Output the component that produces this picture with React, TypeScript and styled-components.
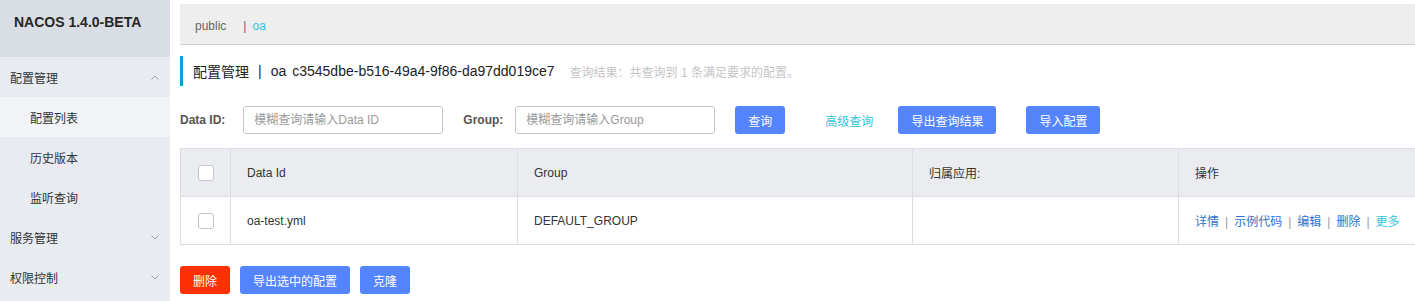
import React from "react";
import styled, { createGlobalStyle } from "styled-components";

const GlobalStyle = createGlobalStyle`
	html, body {
		margin: 0;
		padding: 0;
		overflow: hidden;
		background: #fff;
	}
	body {
		font-family: "Liberation Sans", "Noto Sans CJK SC", sans-serif;
		font-size: 12px;
		color: #333;
	}
	* {
		box-sizing: border-box;
	}
`;

const Layout = styled.div`
	display: flex;
	width: 1415px;
	height: 301px;
	overflow: hidden;
`;

const Side = styled.aside`
	width: 170px;
	flex: none;
	background-color: #e8ebf0;
	display: flex;
	flex-direction: column;
`;

const Logo = styled.div`
	height: 57px;
	background-color: #d9dde4;
	padding: 14px 0 0 14px;
	font-size: 14px;
	font-weight: 700;
	line-height: 16px;
	color: #262626;
`;

const MenuItem = styled.div<{ $level?: number; $active?: boolean }>`
	height: 40px;
	display: flex;
	align-items: center;
	justify-content: space-between;
	padding: 0 11px 0 ${(p) => (p.$level === 2 ? 30 : 10)}px;
	background-color: ${(p) => (p.$active ? "#f2f3f7" : "transparent")};
	color: #333;
	font-size: 12px;
`;

const Main = styled.main`
	flex: 1;
	min-width: 0;
	padding-left: 10px;
	display: flex;
	flex-direction: column;
`;

const Crumbs = styled.div`
	margin-top: 4px;
	height: 41px;
	background-color: #eeeeee;
	border-bottom: 1px solid #cfcfcf;
	display: flex;
	align-items: center;
	padding: 4px 0 0 15px;
	color: #666;
	font-size: 12px;
`;

const CrumbSep = styled.span`
	margin: 0 6px 0 17px;
`;

const CrumbActive = styled.span`
	color: #33c4e0;
`;

const TitleRow = styled.div`
	margin-top: 11px;
	height: 30px;
	border-left: 3px solid #0a9fd8;
	padding-left: 10px;
	display: flex;
	align-items: center;
	font-size: 14px;
	color: #222;
`;

const TitleBar = styled.span`
	margin: 0 9px;
`;

const TitleId = styled.span`
	margin-left: 6px;
`;

const ResultText = styled.span`
	margin-left: 15px;
	font-size: 12px;
	color: #c5c5c5;
`;

const SearchRow = styled.div`
	margin-top: 20px;
	display: flex;
	align-items: center;
	height: 28px;
`;

const FieldLabel = styled.label<{ $gap?: number }>`
	font-weight: 700;
	font-size: 12px;
	color: #555;
	margin-right: ${(p) => p.$gap ?? 12}px;
`;

const Input = styled.input`
	width: 200px;
	height: 28px;
	border: 1px solid #c4c6cf;
	border-radius: 3px;
	padding: 0 10px;
	font-family: inherit;
	font-size: 12px;
	color: #333;
	margin-right: 20px;
	outline: none;
	&::placeholder {
		color: #999;
	}
`;

const Button = styled.button<{ $variant?: "primary" | "danger"; $gap?: number }>`
	height: 28px;
	padding: 0 13px;
	border: none;
	border-radius: 3px;
	font-family: inherit;
	font-size: 12px;
	color: #fff;
	background-color: ${(p) => (p.$variant === "danger" ? "#ff3000" : "#5584ff")};
	margin-right: ${(p) => p.$gap ?? 10}px;
	cursor: pointer;
	white-space: nowrap;
`;

const TextButton = styled.span`
	font-size: 12px;
	color: #33c4e0;
	margin: 0 25px 0 40px;
`;

const Table = styled.table`
	margin-top: 14px;
	width: 1280px;
	border-collapse: collapse;
	table-layout: fixed;
	border: 1px solid #dcdee3;
	font-size: 12px;
`;

const Th = styled.th<{ $w?: number; $check?: boolean }>`
	width: ${(p) => (p.$w ? `${p.$w}px` : "auto")};
	height: 48px;
	background-color: #ebecf0;
	border: 1px solid #dcdee3;
	text-align: left;
	font-weight: 400;
	color: #333;
	padding: ${(p) => (p.$check ? 0 : "0 16px")};
`;

const Td = styled.td<{ $check?: boolean }>`
	height: 48px;
	border: 1px solid #dcdee3;
	padding: ${(p) => (p.$check ? 0 : "0 16px")};
	color: #333;
`;

const CheckCell = styled.div`
	display: flex;
	justify-content: center;
`;

const Checkbox = styled.span`
	display: block;
	width: 16px;
	height: 16px;
	border: 1px solid #c4c6cf;
	border-radius: 3px;
	background: #fff;
`;

const Action = styled.a<{ $light?: boolean }>`
	color: ${(p) => (p.$light ? "#33c4e0" : "#2c74cc")};
	text-decoration: none;
`;

const ActionSep = styled.span`
	color: #999;
	margin: 0 6px;
`;

const Footer = styled.div`
	margin-top: 21px;
	display: flex;
`;

const Chevron = ({ up }: { up?: boolean }) => (
	<svg width="8" height="5" viewBox="0 0 8 5">
		<polyline
			points={up ? "0.5,4.5 4,1 7.5,4.5" : "0.5,0.5 4,4 7.5,0.5"}
			fill="none"
			stroke="#9aa0a8"
			strokeWidth="1"
		/>
	</svg>
);

const actions = ["详情", "示例代码", "编辑", "删除"];

export default function App() {
	return (
		<Layout>
			<GlobalStyle />
			<Side>
				<Logo>NACOS 1.4.0-BETA</Logo>
				<MenuItem>
					配置管理
					<Chevron up />
				</MenuItem>
				<MenuItem $level={2} $active>
					配置列表
				</MenuItem>
				<MenuItem $level={2}>历史版本</MenuItem>
				<MenuItem $level={2}>监听查询</MenuItem>
				<MenuItem>
					服务管理
					<Chevron />
				</MenuItem>
				<MenuItem>
					权限控制
					<Chevron />
				</MenuItem>
			</Side>
			<Main>
				<Crumbs>
					public
					<CrumbSep>|</CrumbSep>
					<CrumbActive>oa</CrumbActive>
				</Crumbs>
				<TitleRow>
					配置管理
					<TitleBar>|</TitleBar>
					oa
					<TitleId>c3545dbe-b516-49a4-9f86-da97dd019ce7</TitleId>
					<ResultText>查询结果：共查询到 1 条满足要求的配置。</ResultText>
				</TitleRow>
				<SearchRow>
					<FieldLabel $gap={18}>Data ID:</FieldLabel>
					<Input placeholder="模糊查询请输入Data ID" />
					<FieldLabel>Group:</FieldLabel>
					<Input placeholder="模糊查询请输入Group" />
					<Button $gap={0}>查询</Button>
					<TextButton>高级查询</TextButton>
					<Button $gap={30}>导出查询结果</Button>
					<Button>导入配置</Button>
				</SearchRow>
				<Table>
					<thead>
						<tr>
							<Th $w={50} $check>
								<CheckCell>
									<Checkbox />
								</CheckCell>
							</Th>
							<Th $w={287}>Data Id</Th>
							<Th $w={395}>Group</Th>
							<Th $w={266}>归属应用:</Th>
							<Th>操作</Th>
						</tr>
					</thead>
					<tbody>
						<tr>
							<Td $check>
								<CheckCell>
									<Checkbox />
								</CheckCell>
							</Td>
							<Td>oa-test.yml</Td>
							<Td>DEFAULT_GROUP</Td>
							<Td />
							<Td>
								{actions.map((a) => (
									<React.Fragment key={a}>
										<Action href="#">{a}</Action>
										<ActionSep>|</ActionSep>
									</React.Fragment>
								))}
								<Action href="#" $light>
									更多
								</Action>
							</Td>
						</tr>
					</tbody>
				</Table>
				<Footer>
					<Button $variant="danger">删除</Button>
					<Button>导出选中的配置</Button>
					<Button>克隆</Button>
				</Footer>
			</Main>
		</Layout>
	);
}
